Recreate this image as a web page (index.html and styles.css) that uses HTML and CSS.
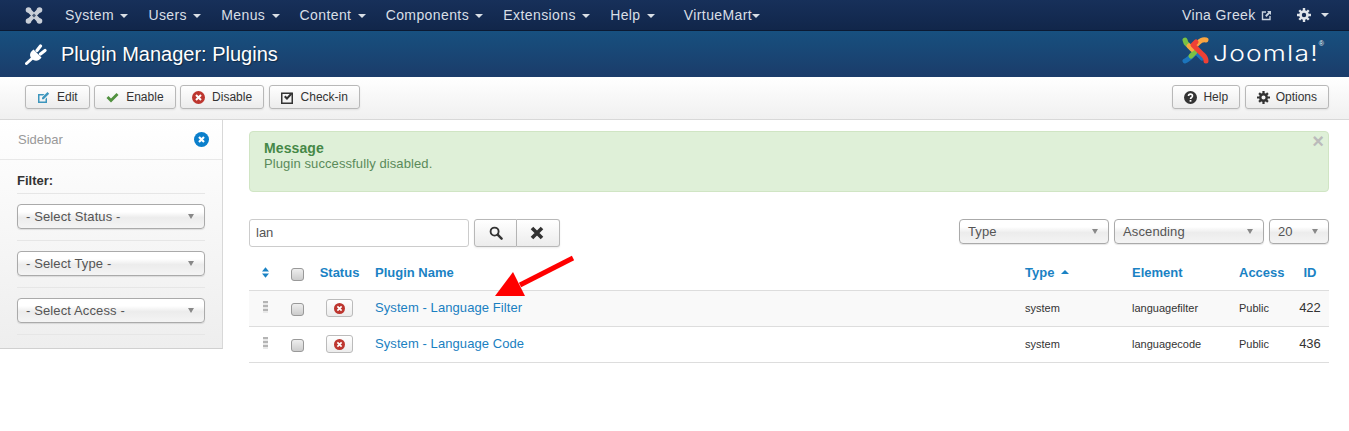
FILE: index.html
```html
<!DOCTYPE html>
<html lang="en">
<head>
    <meta charset="UTF-8">
    <title>Plugin Manager: Plugins</title>
    <link rel="stylesheet" href="styles.css">
</head>
<body>

    <nav class="navbar">
        <svg class="brand" width="18" height="17" viewBox="0 0 18 17">
            <path d="M4 3.500l10 10M14 3.500l-10 10" fill="none" stroke="#c9cfd8" stroke-width="4.500"/>
            <circle cx="3.500" cy="3" r="2.800" fill="#c9cfd8"/>
            <circle cx="14.500" cy="3" r="2.800" fill="#c9cfd8"/>
            <circle cx="3.500" cy="14" r="2.800" fill="#c9cfd8"/>
            <circle cx="14.500" cy="14" r="2.800" fill="#c9cfd8"/>
            <path d="M9 6.500l2 2-2 2-2-2z" fill="#4a5a74"/>
        </svg>
        <ul class="menu">
            <li>System <span class="caret"></span></li>
            <li>Users <span class="caret"></span></li>
            <li>Menus <span class="caret"></span></li>
            <li>Content <span class="caret"></span></li>
            <li>Components <span class="caret"></span></li>
            <li>Extensions <span class="caret"></span></li>
            <li>Help <span class="caret"></span></li>
            <li class="menu-vm">VirtueMart<span class="caret caret-tight"></span></li>
        </ul>
        <div class="nav-right">
            <span class="nav-user">Vina Greek
                <svg width="11" height="11" viewBox="0 0 11 11" class="ext-icon">
                    <path d="M5 2H1.500v7.500H9V6" fill="none" stroke="#c9d3df" stroke-width="1.400"/>
                    <path d="M6 1h4v4L8.700 3.700 5.500 6.900 4.100 5.500 7.300 2.300z" fill="#c9d3df"/>
                </svg>
            </span>
            <span class="nav-gear">
                <svg width="14" height="14" viewBox="0 0 14 14">
                    <circle cx="7" cy="7" r="3.500" fill="none" stroke="#dfe4ea" stroke-width="2.600"/>
                    <path d="M5.800 0h2.400v3H5.800zM5.800 11h2.400v3H5.800zM0 5.800h3v2.400H0zM11 5.800h3v2.400h-3zM1.400 3.100l1.700-1.700 2 2-1.700 1.700zM8.900 10.600l1.700-1.700 2 2-1.700 1.700zM10.900 1.400l1.700 1.700-2 2-1.700-1.700zM3.400 8.900l1.700 1.700-2 2-1.700-1.700z" fill="#dfe4ea"/>
                </svg>
            </span>
            <span class="caret"></span>
        </div>
    </nav>

    <header class="header">
        <svg class="plug" width="22" height="21" viewBox="0 0 22 21">
            <path d="M8.500 5.500L16.500 13.500C13.500 17.500 9.500 17.500 6.800 14.800C4 12 4.500 8.500 8.500 5.500z" fill="#fff"/>
            <path d="M7 14.500L1.500 19.500" stroke="#fff" stroke-width="3" stroke-linecap="round"/>
            <path d="M12 6.500L15.500 2M15.500 10L20 6.500" stroke="#fff" stroke-width="3.200" stroke-linecap="round"/>
        </svg>
        <h1 class="page-title">Plugin Manager: Plugins</h1>
        <div class="logo">
            <svg class="logo-mark-icon" width="29" height="29" viewBox="0 0 29 29">
                <g fill="none" stroke-width="5" stroke-linecap="round" stroke-linejoin="round">
                    <path d="M4 25c3-1 8-6 11-9l6 6" stroke="#1c75bc"/>
                    <path d="M4 4l1 3 9 9-4 4" stroke="#7ac143"/>
                    <path d="M25 4c-4-1-6 1-8 3l-6 6-3-3" stroke="#f9a541"/>
                    <path d="M25 25c0-4-2-5-4-7l-9-9 3-3" stroke="#ee4035"/>
                </g>
            </svg>
            <span class="logo-text">Joomla!</span>
            <sup class="logo-reg">®</sup>
        </div>
    </header>

    <div class="subhead">
        <div class="toolbar">
            <button class="btn">
                <svg width="13" height="13" viewBox="0 0 13 13"><path d="M1 3h6.500L6 4.500H2.500v6h6V8L10 6.500V12H1z" fill="#3d96bd"/><path d="M5 6.500L10.500 1l1.700 1.700L6.700 8.200H5z" fill="#3d96bd"/></svg>
                Edit
            </button>
            <button class="btn">
                <svg width="13" height="11" viewBox="0 0 13 11"><path d="M0.500 6l2-2 2.500 2.500L10.500 1l2 2L5 10.500z" fill="#51913f"/></svg>
                Enable
            </button>
            <button class="btn">
                <svg width="13" height="13" viewBox="0 0 13 13"><circle cx="6.500" cy="6.500" r="6.500" fill="#bd362f"/><path d="M4 4l5 5M9 4l-5 5" stroke="#fff" stroke-width="2"/></svg>
                Disable
            </button>
            <button class="btn">
                <svg width="13" height="13" viewBox="0 0 13 13"><path d="M0.750 2.250h10.500v10H0.750z" fill="none" stroke="#333" stroke-width="1.500"/><path d="M3 6l1.500-1.500 1.500 1.500L10 1.500l1.500 1.500L6 9z" fill="#333"/></svg>
                Check-in
            </button>
            <span class="toolbar-gap"></span>
            <button class="btn">
                <svg width="13" height="13" viewBox="0 0 13 13"><circle cx="6.500" cy="6.500" r="6.500" fill="#333"/><path d="M4.500 5c0-2.500 4-2.500 4 0 0 1.500-2 1.500-2 3" fill="none" stroke="#fff" stroke-width="1.600"/><path d="M5.600 9h1.800v1.700H5.600z" fill="#fff"/></svg>
                Help
            </button>
            <button class="btn">
                <svg width="13" height="13" viewBox="0 0 14 14"><circle cx="7" cy="7" r="3.500" fill="none" stroke="#333" stroke-width="2.600"/><path d="M5.800 0h2.400v3H5.800zM5.800 11h2.400v3H5.800zM0 5.800h3v2.400H0zM11 5.800h3v2.400h-3zM1.400 3.100l1.700-1.700 2 2-1.700 1.700zM8.900 10.600l1.700-1.700 2 2-1.700 1.700zM10.900 1.400l1.700 1.700-2 2-1.700-1.700zM3.400 8.900l1.700 1.700-2 2-1.700-1.700z" fill="#333"/></svg>
                Options
            </button>
        </div>
    </div>

    <div class="page">
        <aside class="sidebar">
            <div class="sidebar-head">
                <span>Sidebar</span>
                <svg width="15" height="15" viewBox="0 0 15 15"><circle cx="7.500" cy="7.500" r="7.500" fill="#0b7fcb"/><path d="M5 5l5 5M10 5l-5 5" stroke="#fff" stroke-width="2.200"/></svg>
            </div>
            <div class="sidebar-body">
                <h4 class="filter-title">Filter:</h4>
                <div class="filter-row"><div class="select">- Select Status -<span class="arrow"></span></div></div>
                <div class="filter-row"><div class="select">- Select Type -<span class="arrow"></span></div></div>
                <div class="filter-row"><div class="select">- Select Access -<span class="arrow"></span></div></div>
            </div>
        </aside>

        <main class="content">
            <div class="alert">
                <span class="alert-close">×</span>
                <h4 class="alert-title">Message</h4>
                <div>Plugin successfully disabled.</div>
            </div>

            <div class="search-bar">
                <div class="search-input">lan</div>
                <div class="btn-group">
                    <button class="btn btn-icon">
                        <svg width="14" height="14" viewBox="0 0 15 15"><circle cx="6" cy="6" r="4.300" fill="none" stroke="#333" stroke-width="2"/><path d="M9.500 9.500l4 4" stroke="#333" stroke-width="2.600" stroke-linecap="round"/></svg>
                    </button>
                    <button class="btn btn-icon">
                        <svg width="14" height="14" viewBox="0 0 14 14"><path d="M2 2l10 10M12 2L2 12" stroke="#333" stroke-width="3.600"/></svg>
                    </button>
                </div>
                <div class="sort-selects">
                    <div class="select select-type">Type<span class="arrow"></span></div>
                    <div class="select select-dir">Ascending<span class="arrow"></span></div>
                    <div class="select select-num">20<span class="arrow"></span></div>
                </div>
            </div>

            <div class="table-wrap">
                <table class="plugins">
                    <colgroup>
                        <col class="col-order"><col class="col-check"><col class="col-status"><col>
                        <col class="col-type"><col class="col-element"><col class="col-access"><col class="col-id">
                    </colgroup>
                    <thead>
                        <tr>
                            <th class="center">
                                <svg class="order-icon" width="7" height="11" viewBox="0 0 8 12"><path d="M4 0l4 4.800H0zM4 12L0 7.200h8z" fill="#1a82c4"/></svg>
                            </th>
                            <th class="center"><span class="checkbox"></span></th>
                            <th class="center">Status</th>
                            <th>Plugin Name</th>
                            <th>Type <span class="sort-up"></span></th>
                            <th>Element</th>
                            <th>Access</th>
                            <th class="center id-cell">ID</th>
                        </tr>
                    </thead>
                    <tbody>
                        <tr class="striped">
                            <td class="center"><span class="grip"></span></td>
                            <td class="center"><span class="checkbox"></span></td>
                            <td class="center"><span class="status-btn"><svg width="11" height="11" viewBox="0 0 13 13"><circle cx="6.500" cy="6.500" r="6.500" fill="#bd362f"/><path d="M4 4l5 5M9 4l-5 5" stroke="#fff" stroke-width="2"/></svg></span></td>
                            <td><a class="name-link">System - Language Filter</a></td>
                            <td class="small">system</td>
                            <td class="small">languagefilter</td>
                            <td class="small">Public</td>
                            <td class="center id-cell">422</td>
                        </tr>
                        <tr>
                            <td class="center"><span class="grip"></span></td>
                            <td class="center"><span class="checkbox"></span></td>
                            <td class="center"><span class="status-btn"><svg width="11" height="11" viewBox="0 0 13 13"><circle cx="6.500" cy="6.500" r="6.500" fill="#bd362f"/><path d="M4 4l5 5M9 4l-5 5" stroke="#fff" stroke-width="2"/></svg></span></td>
                            <td><a class="name-link">System - Language Code</a></td>
                            <td class="small">system</td>
                            <td class="small">languagecode</td>
                            <td class="small">Public</td>
                            <td class="center id-cell">436</td>
                        </tr>
                    </tbody>
                </table>
                <svg class="red-arrow" width="82" height="44" viewBox="0 0 82 44">
                    <path d="M79 4L26 31" stroke="#f00" stroke-width="5"/>
                    <path d="M1 42L19 18 31 42z" fill="#f00"/>
                </svg>
            </div>
        </main>
    </div>

</body>
</html>
```

FILE: styles.css
```css
body {
    font-family: "Liberation Sans", Arial, sans-serif;
    font-size: 13px;
    line-height: 18px;
    color: #333;
    background: #fff;
    margin: 0;
}

.navbar {
    height: 30px;
    display: flex;
    align-items: center;
    background: linear-gradient(#17305a, #11264a);
    border-bottom: 1px solid #0b1a33;
    color: #d9dfe6;
    font-size: 14px;
    letter-spacing: 0.4px;
    padding: 0 20px 0 25px;
}

.brand {
    margin-right: 22px;
}

.menu {
    display: flex;
    list-style: none;
    margin: 0;
    padding: 0;
    gap: 20px;
}

.menu-vm {
    margin-left: 9px;
}

.caret {
    display: inline-block;
    width: 0;
    height: 0;
    margin-left: 2px;
    vertical-align: middle;
    border-top: 4px solid #d9dfe6;
    border-left: 4px solid transparent;
    border-right: 4px solid transparent;
}

.caret-tight {
    margin-left: 0;
}

.nav-right {
    margin-left: auto;
    display: flex;
    align-items: center;
}

.ext-icon {
    margin-left: 1px;
    vertical-align: -1px;
}

.nav-gear {
    display: flex;
    margin: 0 8px 0 25px;
}

.header {
    height: 46px;
    display: flex;
    align-items: center;
    background: linear-gradient(#17507f, #1b3c6a);
    padding: 0 20px 0 25px;
    color: #fff;
}

.plug {
    margin-right: 14px;
}

.page-title {
    margin: 0;
    font-size: 20px;
    font-weight: normal;
    text-shadow: 1px 1px 1px rgba(0, 0, 0, 0.4);
}

.logo {
    margin-left: auto;
    display: flex;
    align-items: center;
    margin-right: 5px;
}

.logo-mark-icon {
    margin-bottom: 7px;
}

.logo-text {
    width: 106px;
    margin: 0 0 3px 3px;
    font-family: Inter, sans-serif;
    font-weight: 300;
    font-size: 22px;
    letter-spacing: 1px;
    line-height: 28px;
    white-space: nowrap;
    transform: scaleX(1.200);
    transform-origin: left center;
}

.logo-reg {
    font-size: 7px;
    line-height: 7px;
    align-self: flex-start;
    margin: 4px 0 0 0;
}

.subhead {
    height: 43px;
    box-sizing: border-box;
    background: linear-gradient(#fff, #f0f0f0);
    border-bottom: 1px solid #d8d8d8;
    padding: 8px 20px 0 25px;
}

.toolbar {
    display: flex;
    gap: 4.500px;
}

.toolbar-gap {
    flex: 1;
}

.btn {
    height: 24px;
    box-sizing: border-box;
    display: inline-flex;
    align-items: center;
    gap: 7px;
    padding: 0 11px;
    font-family: inherit;
    font-size: 12px;
    color: #333;
    background: linear-gradient(#fff, #ececec);
    border: 1px solid #b8b8b8;
    border-radius: 3px;
    box-shadow: 0 1px 2px rgba(0, 0, 0, 0.08);
}

.toolbar-gap ~ .btn {
    gap: 6px;
}

.page {
    display: flex;
    align-items: flex-start;
}

.sidebar {
    width: 223px;
    height: 229px;
    box-sizing: border-box;
    flex: none;
    background: linear-gradient(#fff, #eee);
    border-right: 1px solid #d8d8d8;
    border-bottom: 1px solid #d0d0d0;
}

.sidebar-head {
    height: 40px;
    box-sizing: border-box;
    display: flex;
    align-items: center;
    justify-content: space-between;
    padding: 0 13px 0 18px;
    color: #999;
    font-size: 13px;
    border-bottom: 1px solid #e8e8e8;
}

.sidebar-body {
    padding: 12px 17px 0 17px;
}

.filter-title {
    margin: 0;
    height: 21px;
    font-size: 13px;
    color: #333;
    border-bottom: 1px solid #e6e6e6;
}

.filter-row {
    height: 36px;
    padding: 10px 0 0;
    border-bottom: 1px solid #e6e6e6;
}

.select {
    position: relative;
    height: 25px;
    box-sizing: border-box;
    padding: 0 8px;
    line-height: 23px;
    font-size: 13px;
    letter-spacing: 0.12px;
    color: #555;
    background: linear-gradient(#fff 30%, #ececec 55%, #f4f4f4);
    border: 1px solid #aaa;
    border-radius: 4px;
    box-shadow: 0 1px 1px rgba(0, 0, 0, 0.1);
}

.arrow {
    position: absolute;
    top: 9px;
    right: 10px;
    width: 0;
    height: 0;
    border-top: 5px solid #888;
    border-left: 3px solid transparent;
    border-right: 3px solid transparent;
}

.content {
    flex: 1;
    padding: 11px 20px 0 26px;
}

.alert {
    position: relative;
    height: 61px;
    box-sizing: border-box;
    padding: 9px 14px 0 14px;
    color: #5a8a5a;
    background: #dff0d8;
    border: 1px solid #d0e5c4;
    border-radius: 4px;
    line-height: 15px;
    letter-spacing: 0.1px;
}

.alert-title {
    margin: 0;
    font-size: 14px;
    color: #468847;
}

.alert-close {
    position: absolute;
    top: 2px;
    right: 4px;
    font-size: 20px;
    font-weight: bold;
    line-height: 15px;
    color: #bbb;
}

.search-bar {
    display: flex;
    align-items: flex-start;
    margin-top: 27px;
}

.search-input {
    width: 220px;
    height: 28px;
    box-sizing: border-box;
    padding: 0 6px;
    line-height: 26px;
    color: #555;
    border: 1px solid #ccc;
    border-radius: 3px;
}

.btn-group {
    display: flex;
    margin-left: 5px;
}

.btn-icon {
    width: 43px;
    height: 28px;
    justify-content: center;
    padding: 0;
    border-radius: 3px 0 0 3px;
}

.btn-icon + .btn-icon {
    width: 43px;
    padding-right: 3px;
    border-left: none;
    border-radius: 0 3px 3px 0;
}

.sort-selects {
    margin-left: auto;
    display: flex;
    gap: 5px;
}

.select-type {
    width: 150px;
}

.select-dir {
    width: 150px;
}

.select-num {
    width: 60px;
}

.table-wrap {
    position: relative;
    margin-top: 8px;
}

.plugins {
    width: 100%;
    table-layout: fixed;
    border-collapse: collapse;
}

.col-order {
    width: 33px;
}

.col-check {
    width: 30px;
}

.col-status {
    width: 55px;
}

.col-type {
    width: 107px;
}

.col-element {
    width: 107px;
}

.col-access {
    width: 64px;
}

.col-id {
    width: 34px;
}

.plugins th {
    height: 35px;
    padding: 2px 8px 0;
    text-align: left;
    color: #1a82c4;
    font-size: 13px;
    box-sizing: border-box;
}

.plugins td {
    height: 36px;
    padding: 0 8px;
    box-sizing: border-box;
    border-top: 1px solid #ddd;
}

.plugins tbody tr:last-child td {
    border-bottom: 1px solid #ddd;
}

.plugins .center {
    text-align: center;
    padding: 0;
}

.plugins th.center {
    padding-top: 2px;
}

.plugins .id-cell {
    padding-right: 4px;
}

.striped td {
    background: #f9f9f9;
}

.small {
    font-size: 11px;
}

.name-link {
    color: #1a7fc1;
    letter-spacing: 0.08px;
}

.checkbox {
    display: inline-block;
    width: 11px;
    height: 11px;
    vertical-align: -4px;
    background: linear-gradient(#eee, #ccc);
    border: 1px solid #999;
    border-radius: 3px;
}

.order-icon {
    vertical-align: -1px;
}

.status-btn {
    display: inline-flex;
    align-items: center;
    justify-content: center;
    width: 25px;
    height: 16px;
    background: linear-gradient(#fff, #ececec);
    border: 1px solid #bbb;
    border-radius: 3px;
    vertical-align: middle;
}

.grip {
    display: inline-block;
    width: 5px;
    height: 12px;
    margin-bottom: 4px;
    vertical-align: middle;
    background: repeating-linear-gradient(#b4b4b4 0, #b4b4b4 2px, #e8e8e8 2px, #e8e8e8 4px);
}

.sort-up {
    display: inline-block;
    margin-left: 3px;
    vertical-align: 3px;
    border-bottom: 4px solid #1a82c4;
    border-left: 4px solid transparent;
    border-right: 4px solid transparent;
}

.red-arrow {
    position: absolute;
    left: 245px;
    top: -1px;
}
```
